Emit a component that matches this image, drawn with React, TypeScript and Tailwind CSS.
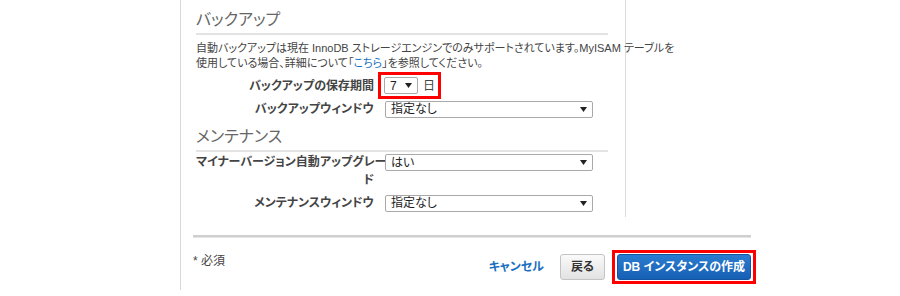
const FONT = "font-['Liberation_Sans','Noto_Sans_CJK_JP',sans-serif] [font-feature-settings:'palt']";

function Arrow() {
  return (
    <svg width="7" height="5" viewBox="0 0 7 5" className="shrink-0">
      <path d="M0 0h7L3.5 5z" fill="#222" />
    </svg>
  );
}

function Select({ value, width }: { value: string; width: string }) {
  return (
    <div
      className={`${width} h-[17px] flex items-center justify-between border border-[#a9a9a9] rounded-[2px] bg-white pl-[5px] pr-[5px] text-[12px] leading-none text-[#222]`}
    >
      <span>{value}</span>
      <Arrow />
    </div>
  );
}

function Row({ label, children, top = "items-center" }: { label: React.ReactNode; children: React.ReactNode; top?: string }) {
  return (
    <div className={`flex ${top}`}>
      <div className="w-[178px] shrink-0 text-right text-[12px] leading-[18px] font-bold text-[#444] whitespace-nowrap">
        {label}
      </div>
      <div className="ml-[11px] flex items-center">{children}</div>
    </div>
  );
}

function Heading({ children }: { children: React.ReactNode }) {
  return (
    <div className="mr-[17px] border-b-2 border-[#e3e3e3] pb-[3px] text-[16px] leading-[20px] text-[#666]">
      {children}
    </div>
  );
}

export default function App() {
  return (
    <div className={`w-[900px] h-[296px] bg-white overflow-hidden ${FONT}`}>
      <div className="ml-[180px] h-[290px] border-l border-[#d8d8d8]">
        <div className="w-[445px] h-[217px] border-r border-[#dcdcdc] pl-[15px] pt-[10px]">
          <Heading>バックアップ</Heading>
          <p className="mt-[6px] text-[11px] leading-[15px] text-[#444] whitespace-nowrap">
            自動バックアップは現在 InnoDB ストレージエンジンでのみサポートされています。MyISAM テーブルを
            <br />
            使用している場合、詳細について「<span className="text-[#1a6fc0]">こちら</span>」を参照してください。
          </p>
          <div className="mt-[1px] flex flex-col gap-[1px]">
            <Row label="バックアップの保存期間">
              <div className="-ml-[7px] flex items-center border-[3px] border-[#f00] px-[3px] py-[2px]">
                <Select value="7" width="w-[34px]" />
                <span className="ml-[5px] text-[12px] leading-none text-[#444]">日</span>
              </div>
            </Row>
            <Row label="バックアップウィンドウ">
              <Select value="指定なし" width="w-[208px]" />
            </Row>
          </div>
          <div className="mt-[9px]">
            <Heading>メンテナンス</Heading>
          </div>
          <div className="mt-[1px] flex flex-col gap-[5px]">
            <Row label={<>マイナーバージョン自動アップグレー<br />ド</>} top="items-start">
              <div className="pt-[1px]">
                <Select value="はい" width="w-[208px]" />
              </div>
            </Row>
            <Row label="メンテナンスウィンドウ">
              <Select value="指定なし" width="w-[208px]" />
            </Row>
          </div>
        </div>
        <div className="ml-[12px] mt-[18px] w-[558px] h-[3px] bg-[#cfcfcf] border-b border-[#e4e4e4]" />
        <div className="ml-[12px] mt-[12px] w-[563px] flex justify-between items-start">
          <div className="pt-[2px] text-[12px] leading-[18px] text-[#444]">* 必須</div>
          <div className="flex items-center">
            <span className="text-[12px] font-bold text-[#1a6fc0]">キャンセル</span>
            <button className="ml-[16px] w-[45px] h-[26px] rounded-[3px] border border-[#c4c4c4] bg-gradient-to-b from-[#fafafa] to-[#e2e2e2] text-[12px] font-bold text-[#333]">
              戻る
            </button>
            <div className="ml-[7px] border-[3px] border-[#f00] px-[2px] py-[1px]">
              <button className="w-[134px] h-[26px] rounded-[3px] border border-[#1554a0] bg-gradient-to-b from-[#2a7cd0] to-[#1660b4] text-[12px] font-bold text-white">
                DB インスタンスの作成
              </button>
            </div>
          </div>
        </div>
      </div>
    </div>
  );
}
